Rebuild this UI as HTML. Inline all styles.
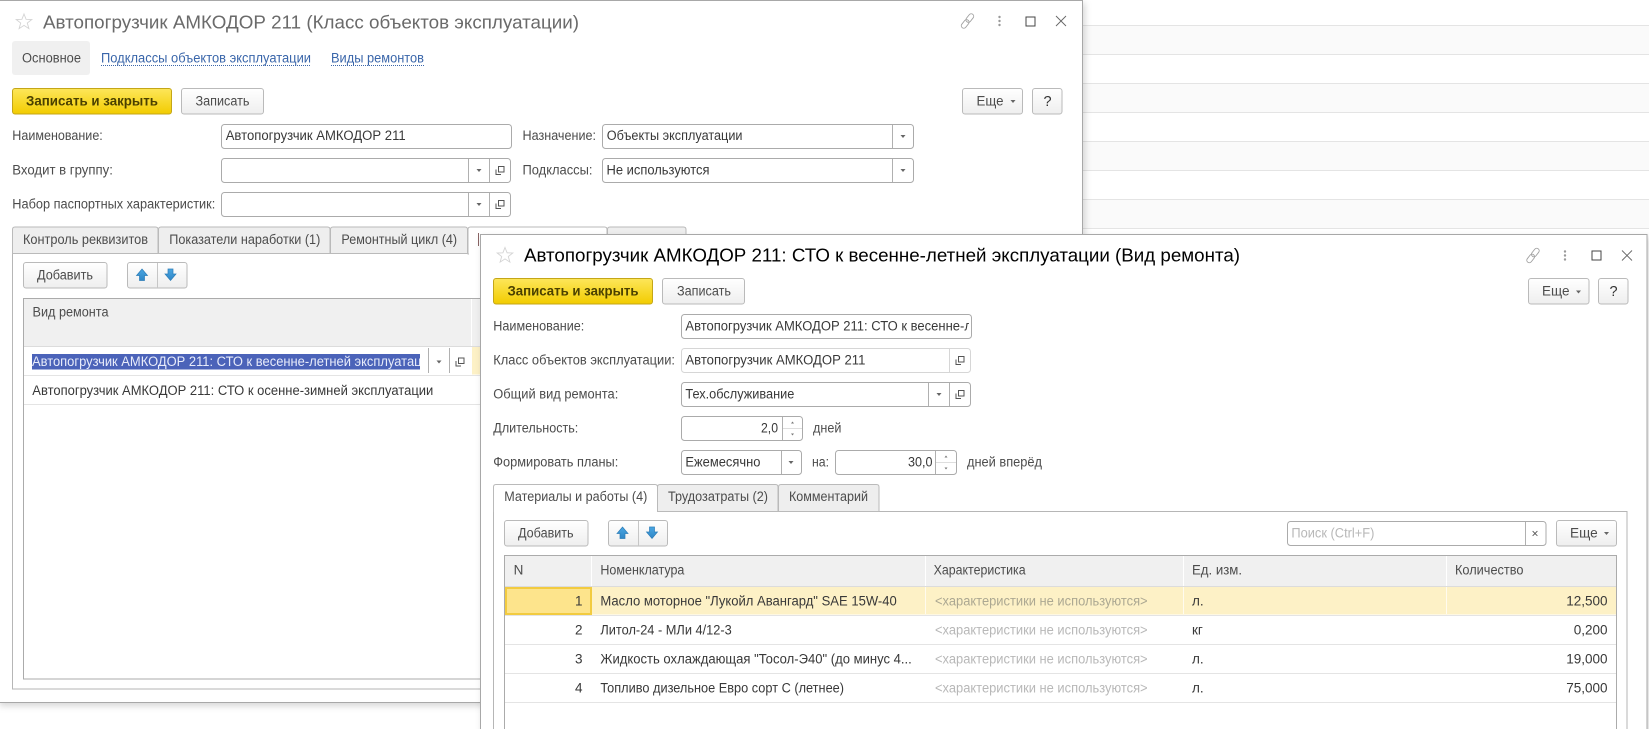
<!DOCTYPE html>
<html lang="ru">
<head>
<meta charset="utf-8">
<title>Автопогрузчик АМКОДОР 211</title>
<style>
html,body{margin:0;padding:0;background:#fff;width:1649px;height:729px;overflow:hidden}
svg{display:block}
text{font-family:"Liberation Sans",Arial,sans-serif;font-size:13.5px;fill:#4c4c4c}
.d{fill:#383838}
.ttl{font-size:18.5px}
.b{font-weight:bold;fill:#4a4000}
.lnk{fill:#3a66aa}
.ph{fill:#b8b8b8}
.ph2{fill:#aca892}
.btn{fill:url(#gb);stroke:#bababa}
.yel{fill:url(#gy);stroke:#c4a618}
.fld{fill:#fff;stroke:#ababab}
.fl2{fill:#fff;stroke:#d6d6d6}
.sep{stroke:#b0b0b0;stroke-width:1}
.tab{fill:#eeeeee;stroke:#bababa}
.ln{stroke:#e4e4e4;stroke-width:1}
</style>
</head>
<body>
<svg width="1649" height="729" viewBox="0 0 1649 729" xmlns="http://www.w3.org/2000/svg">
<defs>
<linearGradient id="gb" x1="0" y1="0" x2="0" y2="1"><stop offset="0" stop-color="#ffffff"/><stop offset="1" stop-color="#eeeeee"/></linearGradient>
<linearGradient id="gy" x1="0" y1="0" x2="0" y2="1"><stop offset="0" stop-color="#fde65a"/><stop offset="1" stop-color="#f2cc00"/></linearGradient>
<linearGradient id="ga" x1="0" y1="0" x2="0" y2="1"><stop offset="0" stop-color="#4aa6e2"/><stop offset="1" stop-color="#2f86c6"/></linearGradient>
<filter id="sh" x="-5%" y="-5%" width="110%" height="110%"><feDropShadow dx="2" dy="3" stdDeviation="3.500" flood-color="#000" flood-opacity=".16"/></filter>
<clipPath id="c1"><rect x="32" y="350" width="388" height="24"/></clipPath>
<clipPath id="c2"><rect x="684" y="316" width="285" height="20"/></clipPath>
<g id="tri"><polygon points="-2.500,-1.500 2.500,-1.500 0,1.500" fill="#666"/></g>
<g id="cp"><path d="M-4,-1V4H1M-1.500,-4H4V1.500H-1.500Z" fill="none" stroke="#555" stroke-width="1"/></g>
<g id="star"><polygon points="0,-8 2.100,-2.700 7.800,-2.500 3.300,1 4.900,6.600 0,3.400 -4.900,6.600 -3.300,1 -7.800,-2.500 -2.100,-2.700" fill="#fff" stroke="#d4d4d4" stroke-width=".9"/></g>
<g id="link" fill="none" stroke="#a0a0a0" stroke-width=".9"><rect x="-2.500" y="-8.500" width="5" height="9.500" rx="2.500" transform="rotate(38)"/><rect x="-2.500" y="-1" width="5" height="9.500" rx="2.500" transform="rotate(38)"/></g>
<g id="wb"><circle cx="0" cy="-4" r="1.200" fill="#999"/><circle cx="0" cy="0" r="1.200" fill="#999"/><circle cx="0" cy="4" r="1.200" fill="#999"/></g>
<g id="mx"><rect x="-4.500" y="-4.500" width="9" height="9" fill="none" stroke="#444" stroke-width="1"/></g>
<g id="cl"><path d="M-5,-5L5,5M5,-5L-5,5" stroke="#666" stroke-width=".9" fill="none"/></g>
<g id="up"><polygon points="0,-6 5.500,0.500 2.500,0.500 2.500,5.500 -2.500,5.500 -2.500,0.500 -5.500,0.500" fill="url(#ga)" stroke="#2c7db8" stroke-width=".7"/></g>
<g id="dn"><polygon points="0,6 5.500,-0.500 2.500,-0.500 2.500,-5.500 -2.500,-5.500 -2.500,-0.500 -5.500,-0.500" fill="url(#ga)" stroke="#2c7db8" stroke-width=".7"/></g>
<g id="sp"><polygon points="-1.500,-5 1.500,-5 0,-7" fill="#777"/><polygon points="-1.500,5 1.500,5 0,7" fill="#777"/></g>
</defs>

<!-- background list -->
<rect x="0" y="0" width="1649" height="729" fill="#fff"/>
<rect x="1083" y="25" width="566" height="29" fill="#fafafa"/>
<rect x="1083" y="83" width="566" height="29" fill="#fafafa"/>
<rect x="1083" y="141" width="566" height="29" fill="#fafafa"/>
<rect x="1083" y="199" width="566" height="29" fill="#fafafa"/>
<path class="ln" d="M1083,25.500H1649M1083,54.500H1649M1083,83.500H1649M1083,112.500H1649M1083,141.500H1649M1083,170.500H1649M1083,199.500H1649M1083,228.500H1649"/>

<!-- window 1 -->
<rect x="-2" y="0.500" width="1084.500" height="702" fill="#fff" stroke="#a8a8a8" filter="url(#sh)"/>
<use href="#star" x="24" y="22"/>
<text class="ttl" x="43" y="28.500" textLength="536" lengthAdjust="spacingAndGlyphs" style="fill:#6a6a6a">Автопогрузчик АМКОДОР 211 (Класс объектов эксплуатации)</text>
<use href="#link" x="967.500" y="21"/>
<use href="#wb" x="999.500" y="21"/>
<use href="#mx" x="1030.500" y="21.500"/>
<use href="#cl" x="1061" y="21"/>

<rect x="12" y="41" width="78" height="34" rx="3" fill="#f0f0f0"/>
<text x="22" y="62.500" textLength="59" lengthAdjust="spacingAndGlyphs">Основное</text>
<text class="lnk" x="101" y="62.500" textLength="210" lengthAdjust="spacingAndGlyphs">Подклассы объектов эксплуатации</text>
<text class="lnk" x="331" y="62.500" textLength="93" lengthAdjust="spacingAndGlyphs">Виды ремонтов</text>
<path d="M101,65.500H311M331,65.500H424" stroke="#3a66aa" stroke-width="1" stroke-dasharray="1 1"/>

<rect class="yel" x="12.500" y="88.500" width="159" height="25.500" rx="2.500"/>
<text class="b" x="26" y="105.500" textLength="132" lengthAdjust="spacingAndGlyphs">Записать и закрыть</text>
<rect class="btn" x="181.500" y="88.500" width="82" height="25.500" rx="2.500"/>
<text x="195.500" y="105.500" textLength="54" lengthAdjust="spacingAndGlyphs">Записать</text>
<rect class="btn" x="962.500" y="88.500" width="60" height="25.500" rx="2.500"/>
<text x="976.500" y="105.500" textLength="27" lengthAdjust="spacingAndGlyphs">Еще</text>
<use href="#tri" x="1013" y="101.500"/>
<rect class="btn" x="1032.500" y="88.500" width="29.500" height="25.500" rx="2.500"/>
<text x="1043.500" y="106" style="font-size:14.500px;fill:#333">?</text>

<text x="12.300" y="140" textLength="90.500" lengthAdjust="spacingAndGlyphs">Наименование:</text>
<rect class="fld" x="221.500" y="124.500" width="290" height="24" rx="3"/>
<text class="d" x="225.700" y="140" textLength="180" lengthAdjust="spacingAndGlyphs">Автопогрузчик АМКОДОР 211</text>
<text x="522.500" y="140" textLength="73.500" lengthAdjust="spacingAndGlyphs">Назначение:</text>
<rect class="fld" x="602.500" y="124.500" width="311" height="24" rx="3"/>
<path class="sep" d="M892.500,125V148"/>
<text class="d" x="606.800" y="140" textLength="135.700" lengthAdjust="spacingAndGlyphs">Объекты эксплуатации</text>
<use href="#tri" x="903" y="136.500"/>

<text x="12.300" y="174.500" textLength="100.600" lengthAdjust="spacingAndGlyphs">Входит в группу:</text>
<rect class="fld" x="221.500" y="158.500" width="289" height="24" rx="3"/>
<path class="sep" d="M468.500,159V182M489.500,159V182"/>
<use href="#tri" x="479" y="170.500"/>
<use href="#cp" x="500" y="170.500"/>
<text x="522.500" y="174.500" textLength="70" lengthAdjust="spacingAndGlyphs">Подклассы:</text>
<rect class="fld" x="602.500" y="158.500" width="311" height="24" rx="3"/>
<path class="sep" d="M892.500,159V182"/>
<text class="d" x="606.500" y="174.500" textLength="103" lengthAdjust="spacingAndGlyphs">Не используются</text>
<use href="#tri" x="903" y="170.500"/>

<text x="12.300" y="208.500" textLength="203" lengthAdjust="spacingAndGlyphs">Набор паспортных характеристик:</text>
<rect class="fld" x="221.500" y="192.500" width="289" height="24" rx="3"/>
<path class="sep" d="M468.500,193V216M489.500,193V216"/>
<use href="#tri" x="479" y="204.500"/>
<use href="#cp" x="500" y="204.500"/>

<!-- tabs w1 -->
<rect x="12.500" y="253.500" width="1056" height="435.500" fill="#fff" stroke="#b6b6b6"/>
<path class="tab" d="M12.500,253.500V229.500Q12.500,227 15,227H155.500Q158,227 158,229.500V253.500Z"/>
<path class="tab" d="M158.500,253.500V229.500Q158.500,227 161,227H327.500Q330,227 330,229.500V253.500Z"/>
<path class="tab" d="M330.500,253.500V229.500Q330.500,227 333,227H465Q467.500,227 467.500,229.500V253.500Z"/>
<path d="M468,254V229.500Q468,227 470.500,227H604.500Q607,227 607,229.500V254Z" fill="#fff" stroke="#bababa"/>
<path d="M469,253.500H606" stroke="#fff" stroke-width="2"/>
<path class="tab" d="M607.500,253.500V229.500Q607.500,227 610,227H683.500Q686,227 686,229.500V253.500Z"/>
<text x="23" y="244" textLength="125" lengthAdjust="spacingAndGlyphs">Контроль реквизитов</text>
<text x="169.300" y="244" textLength="151" lengthAdjust="spacingAndGlyphs">Показатели наработки (1)</text>
<text x="341.400" y="244" textLength="115.700" lengthAdjust="spacingAndGlyphs">Ремонтный цикл (4)</text>
<path d="M478.500,233V246" stroke="#8a6464" stroke-width="1"/>

<rect class="btn" x="23.500" y="262.500" width="83.500" height="25.500" rx="2.500"/>
<text x="37" y="279.500" textLength="56" lengthAdjust="spacingAndGlyphs">Добавить</text>
<rect class="btn" x="127.500" y="262.500" width="59.500" height="25.500" rx="2.500"/>
<path d="M157.500,263V288" stroke="#c6c6c6"/>
<use href="#up" x="142" y="275"/>
<use href="#dn" x="170.500" y="274.500"/>

<rect x="23.500" y="298.500" width="1040" height="380.500" fill="#fff" stroke="#ababab"/>
<rect x="24" y="299" width="1039" height="47" fill="#f0f0f0"/>
<path d="M471.500,299V346" stroke="#fff" stroke-width="1"/>
<path d="M24,346.500H1063" stroke="#dcdcdc"/>
<text x="32.500" y="316.500" textLength="76" lengthAdjust="spacingAndGlyphs">Вид ремонта</text>
<rect x="472" y="347" width="20" height="27.500" fill="#fdf1c6"/>
<rect x="32" y="354" width="388" height="15.500" fill="#4b63b9"/>
<g clip-path="url(#c1)"><text x="32" y="366" style="fill:#e8ecfa" textLength="404" lengthAdjust="spacingAndGlyphs">Автопогрузчик АМКОДОР 211: СТО к весенне-летней эксплуатации</text></g>
<path class="sep" d="M428.500,348V373M449.500,348V373"/>
<use href="#tri" x="439" y="362"/>
<use href="#cp" x="460" y="362"/>
<path class="ln" d="M24,375.500H480M24,404.500H480"/>
<text class="d" x="32.300" y="395" textLength="401" lengthAdjust="spacingAndGlyphs">Автопогрузчик АМКОДОР 211: СТО к осенне-зимней эксплуатации</text>

<!-- window 2 -->
<rect x="480.500" y="234.500" width="1166.500" height="520" fill="#fff" stroke="#a8a8a8" filter="url(#sh)"/>
<use href="#star" x="505" y="255.500"/>
<text class="ttl" x="524" y="261.500" textLength="716" lengthAdjust="spacingAndGlyphs" style="fill:#000">Автопогрузчик АМКОДОР 211: СТО к весенне-летней эксплуатации (Вид ремонта)</text>
<use href="#link" x="1533" y="255.500"/>
<use href="#wb" x="1565" y="255.500"/>
<use href="#mx" x="1596.500" y="255.500"/>
<use href="#cl" x="1627" y="255.500"/>

<rect class="yel" x="493.500" y="278.500" width="159" height="25.500" rx="2.500"/>
<text class="b" x="507.500" y="295.500" textLength="131" lengthAdjust="spacingAndGlyphs">Записать и закрыть</text>
<rect class="btn" x="662.500" y="278.500" width="82" height="25.500" rx="2.500"/>
<text x="677" y="295.500" textLength="54" lengthAdjust="spacingAndGlyphs">Записать</text>
<rect class="btn" x="1528.500" y="278.500" width="60.500" height="25.500" rx="2.500"/>
<text x="1542" y="295.500" textLength="27.500" lengthAdjust="spacingAndGlyphs">Еще</text>
<use href="#tri" x="1578.500" y="292"/>
<rect class="btn" x="1598.500" y="278.500" width="29.500" height="25.500" rx="2.500"/>
<text x="1609.500" y="296" style="font-size:14.500px;fill:#333">?</text>

<text x="493.300" y="330.500" textLength="91" lengthAdjust="spacingAndGlyphs">Наименование:</text>
<rect class="fld" x="681.500" y="314.500" width="290" height="24" rx="3"/>
<g clip-path="url(#c2)"><text class="d" x="685.400" y="330.500" textLength="321" lengthAdjust="spacingAndGlyphs">Автопогрузчик АМКОДОР 211: СТО к весенне-летней</text></g>

<text x="493.300" y="364.500" textLength="181.700" lengthAdjust="spacingAndGlyphs">Класс объектов эксплуатации:</text>
<rect class="fl2" x="681.500" y="348.500" width="289" height="24" rx="3"/>
<path d="M949.500,349V372" stroke="#d6d6d6"/>
<text class="d" x="685.400" y="364.500" textLength="180" lengthAdjust="spacingAndGlyphs">Автопогрузчик АМКОДОР 211</text>
<use href="#cp" x="960" y="360.500"/>

<text x="493.300" y="398.500" textLength="125" lengthAdjust="spacingAndGlyphs">Общий вид ремонта:</text>
<rect class="fld" x="681.500" y="382.500" width="289" height="24" rx="3"/>
<path class="sep" d="M928.500,383V406M949.500,383V406"/>
<text class="d" x="685.400" y="398.500" textLength="109" lengthAdjust="spacingAndGlyphs">Тех.обслуживание</text>
<use href="#tri" x="939" y="394.500"/>
<use href="#cp" x="960" y="394.500"/>

<text x="493.300" y="432.500" textLength="85" lengthAdjust="spacingAndGlyphs">Длительность:</text>
<rect class="fld" x="681.500" y="416.500" width="121" height="24" rx="3"/>
<path class="sep" d="M782.500,417V440"/>
<path d="M783,428.500H802" stroke="#dedede"/>
<use href="#sp" x="792.500" y="428.500"/>
<text class="d" x="761" y="432.500" textLength="17" lengthAdjust="spacingAndGlyphs">2,0</text>
<text x="813" y="432.500" textLength="28.400" lengthAdjust="spacingAndGlyphs">дней</text>

<text x="493.300" y="466.500" textLength="125" lengthAdjust="spacingAndGlyphs">Формировать планы:</text>
<rect class="fld" x="681.500" y="450.500" width="120" height="24" rx="3"/>
<path class="sep" d="M781.500,451V474"/>
<text class="d" x="685.400" y="466.500" textLength="75" lengthAdjust="spacingAndGlyphs">Ежемесячно</text>
<use href="#tri" x="791" y="462.500"/>
<text x="812" y="466.500" textLength="17" lengthAdjust="spacingAndGlyphs">на:</text>
<rect class="fld" x="835.500" y="450.500" width="121" height="24" rx="3"/>
<path class="sep" d="M935.500,451V474"/>
<path d="M936,462.500H956" stroke="#dedede"/>
<use href="#sp" x="946" y="462.500"/>
<text class="d" x="908" y="466.500" textLength="24.500" lengthAdjust="spacingAndGlyphs">30,0</text>
<text x="967" y="466.500" textLength="75" lengthAdjust="spacingAndGlyphs">дней вперёд</text>

<!-- tabs w2 -->
<rect x="493.500" y="511.500" width="1133.500" height="230" fill="#fff" stroke="#b6b6b6"/>
<path class="tab" d="M657.500,511.500V487Q657.500,484.500 660,484.500H775.500Q778,484.500 778,487V511.500Z"/>
<path class="tab" d="M778.500,511.500V487Q778.500,484.500 781,484.500H876.500Q879,484.500 879,487V511.500Z"/>
<path d="M493.500,512V487Q493.500,484.500 496,484.500H655Q657.500,484.500 657.500,487V512" fill="#fff" stroke="#bababa"/>
<path d="M494,511.500H657" stroke="#fff" stroke-width="1.500"/>
<text x="504.300" y="501" textLength="143" lengthAdjust="spacingAndGlyphs">Материалы и работы (4)</text>
<text x="668" y="501" textLength="100" lengthAdjust="spacingAndGlyphs">Трудозатраты (2)</text>
<text x="789" y="501" textLength="79" lengthAdjust="spacingAndGlyphs">Комментарий</text>

<rect class="btn" x="504.500" y="520.500" width="83.500" height="25.500" rx="2.500"/>
<text x="518" y="537.500" textLength="55.600" lengthAdjust="spacingAndGlyphs">Добавить</text>
<rect class="btn" x="608.500" y="520.500" width="59" height="25.500" rx="2.500"/>
<path d="M638.500,521V546" stroke="#c6c6c6"/>
<use href="#up" x="622.500" y="533"/>
<use href="#dn" x="652" y="532.500"/>

<rect class="fld" x="1287.500" y="521.500" width="258.500" height="24" rx="3"/>
<path class="sep" d="M1525.500,522V545"/>
<text class="ph" x="1291.400" y="537.500" textLength="83" lengthAdjust="spacingAndGlyphs">Поиск (Ctrl+F)</text>
<text x="1531.500" y="537.500" style="font-size:12px;fill:#555">×</text>
<rect class="btn" x="1556.500" y="520.500" width="60" height="25.500" rx="2.500"/>
<text x="1570" y="537.500" textLength="27.700" lengthAdjust="spacingAndGlyphs">Еще</text>
<use href="#tri" x="1606.500" y="533.500"/>

<rect x="504.500" y="555.500" width="1112" height="190" fill="#fff" stroke="#ababab"/>
<rect x="505" y="556" width="1111" height="30" fill="#f0f0f0"/>
<path d="M591.500,556V586M925.500,556V586M1183.500,556V586M1446.500,556V586" stroke="#fff"/>
<path d="M505,586.500H1616" stroke="#dcdcdc"/>
<text x="513.600" y="574.500">N</text>
<text x="600.400" y="574.500" textLength="84" lengthAdjust="spacingAndGlyphs">Номенклатура</text>
<text x="933.600" y="574.500" textLength="92" lengthAdjust="spacingAndGlyphs">Характеристика</text>
<text x="1192" y="574.500" textLength="50" lengthAdjust="spacingAndGlyphs">Ед. изм.</text>
<text x="1455" y="574.500" textLength="68.500" lengthAdjust="spacingAndGlyphs">Количество</text>

<rect x="505" y="587" width="1111" height="27.500" fill="#fdf1c6"/>
<rect x="506" y="588" width="85" height="26" fill="#fde48c" stroke="#f2cb40" stroke-width="2"/>
<path d="M925.500,587V614M1183.500,587V614M1446.500,587V614" stroke="#fff" stroke-opacity=".7"/>
<path class="ln" d="M505,615.500H1616M505,644.500H1616M505,673.500H1616M505,702.500H1616"/>

<text class="d" x="582.500" y="605.500" text-anchor="end">1</text>
<text class="d" x="582.500" y="634.500" text-anchor="end">2</text>
<text class="d" x="582.500" y="663.500" text-anchor="end">3</text>
<text class="d" x="582.500" y="692.500" text-anchor="end">4</text>

<text class="d" x="600.400" y="605.500" textLength="296.400" lengthAdjust="spacingAndGlyphs">Масло моторное "Лукойл Авангард" SAE 15W-40</text>
<text class="d" x="600.400" y="634.500" textLength="131.400" lengthAdjust="spacingAndGlyphs">Литол-24 - МЛи 4/12-3</text>
<text class="d" x="600.400" y="663.500" textLength="311.400" lengthAdjust="spacingAndGlyphs">Жидкость охлаждающая "Тосол-Э40" (до минус 4...</text>
<text class="d" x="600.400" y="692.500" textLength="243.600" lengthAdjust="spacingAndGlyphs">Топливо дизельное Евро сорт С (летнее)</text>

<text class="ph2" x="935" y="605.500" textLength="212.600" lengthAdjust="spacingAndGlyphs">&lt;характеристики не используются&gt;</text>
<text class="ph" x="935" y="634.500" textLength="212.600" lengthAdjust="spacingAndGlyphs">&lt;характеристики не используются&gt;</text>
<text class="ph" x="935" y="663.500" textLength="212.600" lengthAdjust="spacingAndGlyphs">&lt;характеристики не используются&gt;</text>
<text class="ph" x="935" y="692.500" textLength="212.600" lengthAdjust="spacingAndGlyphs">&lt;характеристики не используются&gt;</text>

<text class="d" x="1192" y="605.500">л.</text>
<text class="d" x="1192" y="634.500">кг</text>
<text class="d" x="1192" y="663.500">л.</text>
<text class="d" x="1192" y="692.500">л.</text>

<text class="d" x="1607.500" y="605.500" text-anchor="end">12,500</text>
<text class="d" x="1607.500" y="634.500" text-anchor="end">0,200</text>
<text class="d" x="1607.500" y="663.500" text-anchor="end">19,000</text>
<text class="d" x="1607.500" y="692.500" text-anchor="end">75,000</text>
</svg>
</body>
</html>
